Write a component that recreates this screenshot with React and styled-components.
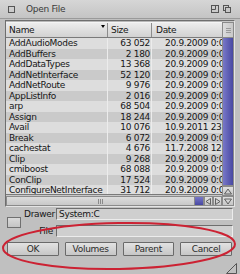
import React from 'react';
import styled, { createGlobalStyle } from 'styled-components';

const Global = createGlobalStyle`
  html, body { margin: 0; padding: 0; background: #bfbfbf; }
  body { font-family: "DejaVu Sans", sans-serif; }
`;

const Window = styled.div`
  position: relative;
  width: 240px;
  height: 274px;
  background: #c0c0c0;
  display: flex;
  flex-direction: column;
  overflow: hidden;
  font-family: "DejaVu Sans", sans-serif;
  font-size: 9px;
  letter-spacing: -0.3px;
  color: #161616;
`;

const TitleBar = styled.div`
  height: 19px;
  flex: none;
  box-sizing: border-box;
  display: flex;
  align-items: center;
  padding: 0 9px 0 8px;
  background: linear-gradient(#d6d6d6, #c4c4c4);
  border-bottom: 1px solid #9a9a9a;
`;

const Title = styled.span`
  margin-left: 11px;
  flex: 1;
  color: #3a3a3a;
`;

const Gadget = styled.svg`
  display: block;
  margin-left: ${(p) => p.$gap || 0}px;
`;

const Body = styled.div`
  flex: none;
  padding: 1px 5px 0 5px;
`;

const ListFrame = styled.div`
  display: flex;
  height: 187px;
  box-sizing: border-box;
  border: 1px solid #6e6e6e;
  border-right-color: #e4e4e4;
  border-bottom-color: #e4e4e4;
  background: #b8b8b8;
`;

const ListMain = styled.div`
  width: 217px;
  display: flex;
  flex-direction: column;
  padding-top: 1px;
`;

const cols = '102px 44px 1fr';

const Header = styled.div`
  display: grid;
  grid-template-columns: ${cols};
  height: 16px;
  flex: none;
  box-sizing: border-box;
  background: linear-gradient(#ececec, #d2d2d2);
  border-top: 1px solid #f4f4f4;
  border-bottom: 1px solid #7a7a7a;
`;

const HeadCell = styled.div`
  position: relative;
  display: flex;
  align-items: center;
  padding-left: ${(p) => p.$pl || 3}px;
  border-right: 1px solid #8c8c8c;
  &:last-child { border-right: none; }
`;

const SortArrow = styled.span`
  position: absolute;
  right: 2px;
  top: 2px;
  width: 0;
  height: 0;
  border-left: 2px solid transparent;
  border-right: 2px solid transparent;
  border-top: 3px solid #000;
`;

const Rows = styled.div`
  height: 156px;
  flex: none;
  overflow: hidden;
`;

const Row = styled.div`
  display: grid;
  grid-template-columns: ${cols};
  height: 10.5px;
  line-height: 10.5px;
  background: ${(p) => (p.$alt ? '#cacaca' : '#dddddd')};
`;

const Cell = styled.div`
  overflow: hidden;
  white-space: nowrap;
  text-align: ${(p) => p.$align || 'left'};
  padding-left: ${(p) => p.$pl || 0}px;
  padding-right: ${(p) => p.$pr || 0}px;
  border-right: 1px solid #ececec;
  &:last-child { border-right: none; }
`;

const HScroll = styled.div`
  display: flex;
  height: 12px;
  flex: none;
  box-sizing: border-box;
  border-top: 1px solid #7a7a7a;
  padding-top: 1px;
  background: #c8c8c8;
`;

const HKnob = styled.div`
  width: 189px;
  background: linear-gradient(#dcdcdc, #c8c8c8);
  border: 1px solid #8a8a8a;
  box-sizing: border-box;
  display: flex;
  align-items: center;
  justify-content: center;
`;

const Track = styled.div`
  flex: 1;
  background: ${(p) =>
    p.$v ? 'linear-gradient(90deg, #7878c8, #4848a2)' : 'linear-gradient(#7878c8, #4848a2)'};
  border: 1px solid #8a8a8a;
  ${(p) => (p.$v ? 'border-top: none;' : 'border-left: none;')}
`;

const Arrow = styled.div`
  width: ${(p) => p.$w || 9}px;
  height: ${(p) => p.$hgt || 10}px;
  flex: none;
  box-sizing: border-box;
  background: linear-gradient(#e0e0e0, #c6c6c6);
  border: 1px solid #8a8a8a;
  display: flex;
  align-items: center;
  justify-content: center;
`;

const VScroll = styled.div`
  width: 12px;
  display: flex;
  flex-direction: column;
  padding: 1px 0 0 0;
  box-sizing: border-box;
  background: #c8c8c8;
`;

const VKnob = styled.div`
  height: 16px;
  flex: none;
  box-sizing: border-box;
  background: linear-gradient(90deg, #dcdcdc, #c8c8c8);
  border: 1px solid #8a8a8a;
  display: flex;
  align-items: center;
  justify-content: center;
`;

const Grip = styled.svg`
  display: block;
`;

const Fields = styled.div`
  display: grid;
  grid-template-columns: 14px 29px 177px;
  grid-template-rows: 12px 12px;
  column-gap: 3px;
  row-gap: 5px;
  padding: 1px 0 0 7px;
  align-items: center;
`;

const PopButton = styled.div`
  grid-row: 1 / 3;
  grid-column: 1;
  height: 11px;
  box-sizing: border-box;
  border: 1px solid #707070;
  background: linear-gradient(#dadada, #c4c4c4);
`;

const Label = styled.div`
  grid-column: 2;
  text-align: right;
  white-space: nowrap;
`;

const Input = styled.div`
  grid-column: 3;
  height: 12px;
  box-sizing: border-box;
  border: 1px solid #6e6e6e;
  border-right-color: #ececec;
  border-bottom-color: #ececec;
  background: #cfcfcf;
  line-height: 10px;
  padding-left: 2px;
  white-space: nowrap;
`;

const Buttons = styled.div`
  display: flex;
  gap: 6px;
  padding: 5px 8px 0 7px;
`;

const Button = styled.div`
  flex: 1;
  height: 14px;
  box-sizing: border-box;
  border: 1px solid #6a6a6a;
  border-radius: 1px;
  background: linear-gradient(#e2e2e2, #c6c6c6);
  display: flex;
  align-items: center;
  justify-content: center;
  color: #2a2a2a;
`;

const Bottom = styled.div`
  margin-top: auto;
  height: 14px;
  display: flex;
  justify-content: flex-end;
  align-items: flex-start;
  padding: 3px 3px 0 0;
  box-sizing: border-box;
`;

const Overlay = styled.svg`
  position: absolute;
  left: 0;
  top: 0;
  pointer-events: none;
`;

const files = [
  ['AddAudioModes', '63 052', '20.9.2009 0:00:00'],
  ['AddBuffers', '2 180', '20.9.2009 0:00:00'],
  ['AddDataTypes', '13 368', '20.9.2009 0:00:00'],
  ['AddNetInterface', '52 120', '20.9.2009 0:00:00'],
  ['AddNetRoute', '9 976', '20.9.2009 0:00:00'],
  ['AppListInfo', '2 016', '20.9.2009 0:00:00'],
  ['arp', '68 504', '20.9.2009 0:00:00'],
  ['Assign', '18 244', '20.9.2009 0:00:00'],
  ['Avail', '10 076', '10.9.2011 23:10:42'],
  ['Break', '6 072', '20.9.2009 0:00:00'],
  ['cachestat', '4 676', '11.7.2008 12:01:33'],
  ['Clip', '9 268', '20.9.2009 0:00:00'],
  ['cmiboost', '68 088', '20.9.2009 0:00:00'],
  ['ConClip', '17 524', '20.9.2009 0:00:00'],
  ['ConfigureNetInterface', '31 712', '20.9.2009 0:00:00'],
];

const TriLeft = () => (
  <svg width="7" height="7" viewBox="0 0 7 7"><path d="M5.5 0.5 L1 3.5 L5.5 6.5 Z" fill="none" stroke="#555" strokeWidth="0.9" /></svg>
);
const TriRight = () => (
  <svg width="7" height="7" viewBox="0 0 7 7"><path d="M1.5 0.5 L6 3.5 L1.5 6.5 Z" fill="none" stroke="#555" strokeWidth="0.9" /></svg>
);
const TriUp = () => (
  <svg width="8" height="7" viewBox="0 0 8 7"><path d="M0.5 6 L4 1 L7.5 6 Z" fill="none" stroke="#555" strokeWidth="0.9" /></svg>
);
const TriDown = () => (
  <svg width="8" height="7" viewBox="0 0 8 7"><path d="M0.5 1 L4 6 L7.5 1 Z" fill="none" stroke="#555" strokeWidth="0.9" /></svg>
);

export default function App() {
  return (
    <>
      <Global />
      <Window>
        <TitleBar>
          <Gadget width="7" height="7" viewBox="0 0 7 7">
            <rect x="0.5" y="0.5" width="6" height="6" fill="none" stroke="#555" />
          </Gadget>
          <Title>Open File</Title>
          <Gadget width="8" height="8" viewBox="0 0 8 8">
            <rect x="0.5" y="0.5" width="7" height="7" fill="none" stroke="#555" />
            <path d="M0.5 4.5 H4.5 V0.5" fill="none" stroke="#555" />
          </Gadget>
          <Gadget $gap={4} width="8" height="8" viewBox="0 0 8 8">
            <rect x="0.5" y="0.5" width="5" height="5" fill="none" stroke="#555" />
            <rect x="2.5" y="2.5" width="5" height="5" fill="#c8c8c8" stroke="#555" />
          </Gadget>
        </TitleBar>
        <Body>
          <ListFrame>
            <ListMain>
              <Header>
                <HeadCell>
                  Name
                  <SortArrow />
                </HeadCell>
                <HeadCell>Size</HeadCell>
                <HeadCell $pl={4}>Date</HeadCell>
              </Header>
              <Rows>
                {files.map(([n, s, d], i) => (
                  <Row key={n} $alt={i % 2 === 1}>
                    <Cell $pl={3}>{n}</Cell>
                    <Cell $align="right" $pr={1}>{s}</Cell>
                    <Cell $pl={13}>{d}</Cell>
                  </Row>
                ))}
              </Rows>
              <HScroll>
                <HKnob>
                  <Grip width="7" height="5" viewBox="0 0 7 5">
                    <path d="M1.5 0 V5 M3.5 0 V5 M5.5 0 V5" stroke="#8a8a8a" />
                  </Grip>
                </HKnob>
                <Track />
                <Arrow><TriLeft /></Arrow>
                <Arrow><TriRight /></Arrow>
              </HScroll>
            </ListMain>
            <VScroll>
              <VKnob>
                <Grip width="5" height="7" viewBox="0 0 5 7">
                  <path d="M0 1.5 H5 M0 3.5 H5 M0 5.5 H5" stroke="#9a9a9a" />
                </Grip>
              </VKnob>
              <Track $v />
              <Arrow $w={12} $hgt={10}><TriUp /></Arrow>
              <Arrow $w={12} $hgt={10}><TriDown /></Arrow>
            </VScroll>
          </ListFrame>
        </Body>
        <Fields>
          <PopButton />
          <Label>Drawer</Label>
          <Input>System:C</Input>
          <Label>File</Label>
          <Input />
        </Fields>
        <Buttons>
          <Button>OK</Button>
          <Button>Volumes</Button>
          <Button>Parent</Button>
          <Button>Cancel</Button>
        </Buttons>
        <Bottom>
          <svg width="11" height="11" viewBox="0 0 11 11">
            <path d="M0.5 10.5 L10.5 0.5 V10.5 Z" fill="none" stroke="#555" />
          </svg>
        </Bottom>
        <Overlay width="240" height="274" viewBox="0 0 240 274">
          <ellipse cx="119" cy="246" rx="116" ry="23" fill="none" stroke="#cc2233" strokeWidth="2" transform="rotate(-1 119 246)" />
        </Overlay>
      </Window>
    </>
  );
}
